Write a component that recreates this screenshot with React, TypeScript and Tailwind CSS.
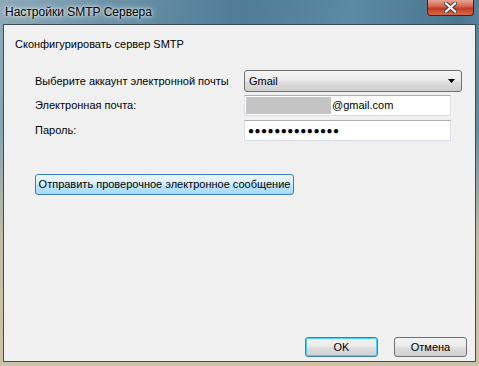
import React from "react";

export default function App() {
  const font = { fontFamily: '"Liberation Sans", Arial, sans-serif' };
  return (
    <div
      className="w-[479px] h-[366px] flex flex-col overflow-hidden bg-[linear-gradient(180deg,rgba(0,0,0,0)_0%,rgba(0,0,0,0)_35%,rgba(201,192,164,0.9)_65%,#cdc4a8_100%),linear-gradient(100deg,#8eaab9_0%,#6d93a9_20%,#4f7c96_45%,#5b8aa3_65%,#4a7790_85%,#7ea0b2_100%)]"
      style={font}
    >
      {/* title bar */}
      <div className="h-[24px] flex items-start justify-between shrink-0">
        <div className="pl-[5px] pt-[3px] text-[12px] text-black [text-shadow:0_0_6px_#ffffff,0_0_3px_#ffffff]">
          Настройки SMTP Сервера
        </div>
        <div className="mr-[5px] w-[47px] h-[16px] rounded-b-[4px] border border-t-0 border-[#5a1a14] bg-[linear-gradient(#e8a493_0%,#d2604a_45%,#c23a22_55%,#d96a4c_100%)] flex items-center justify-center">
          <svg width="13" height="11" viewBox="0 0 13 11">
            <path d="M2 1.5 L11 9.5 M11 1.5 L2 9.5" stroke="#3b3b3b" strokeWidth="4" strokeLinecap="square" />
            <path d="M2 1.5 L11 9.5 M11 1.5 L2 9.5" stroke="#ffffff" strokeWidth="2.2" strokeLinecap="square" />
          </svg>
        </div>
      </div>
      {/* client */}
      <div className="flex-1 mx-[3px] mb-[4px] border border-[#3f4a52] bg-[#f0f0f0] flex flex-col text-[11px] text-black">
        <div className="pl-[11px] pt-[13px] leading-[13px]">Сконфигурировать сервер SMTP</div>
        <div className="pl-[31px] pt-[19px] flex flex-col">
          <div className="flex items-center h-[22px]">
            <div className="w-[209px]">Выберите аккаунт электронной почты</div>
            <div className="w-[218px] h-[22px] rounded-[3px] border border-[#707070] bg-[linear-gradient(#f4f4f4_0%,#ebebeb_45%,#dddddd_55%,#cfcfcf_100%)] flex items-center justify-between pl-[4px] pr-[5px]">
              <span>Gmail</span>
              <svg width="8" height="4" viewBox="0 0 8 4"><path d="M0 0 H7 L3.5 4 Z" fill="#000" /></svg>
            </div>
          </div>
          <div className="flex items-center h-[21px] mt-[3px]">
            <div className="w-[209px]">Электронная почта:</div>
            <div className="w-[207px] h-[21px] border border-[#dbdfe6] border-t-[#abadb3] bg-white flex items-center pl-[1px]">
              <span className="w-[85px] h-[17px] bg-[#c4c4c4]" />
              <span className="ml-[1px]">@gmail.com</span>
            </div>
          </div>
          <div className="flex items-center h-[21px] mt-[4px]">
            <div className="w-[209px]">Пароль:</div>
            <div className="w-[207px] h-[21px] border border-[#dbdfe6] border-t-[#abadb3] bg-white flex items-center pl-[3px]">
              <span className="tracking-[0.5px] text-[10px]">●●●●●●●●●●●●●●</span>
            </div>
          </div>
          <div className="mt-[33px]">
            <button className="h-[21px] w-[259px] rounded-[3px] border border-[#3c7fb1] bg-[linear-gradient(#eaf6fd_0%,#d9f0fc_45%,#bee6fd_55%,#a7d9f5_100%)] text-[11px] text-black leading-none">
              Отправить проверочное электронное сообщение
            </button>
          </div>
        </div>
        <div className="flex-1" />
        <div className="flex justify-end gap-[16px] pr-[8px] pb-[4px]">
          <button className="w-[73px] h-[20px] rounded-[3px] border border-[#3c7fb1] bg-[linear-gradient(#f2f2f2_0%,#ebebeb_45%,#dddddd_55%,#cfcfcf_100%)] shadow-[inset_0_0_0_1px_#48d4f8] text-[11px] leading-none">
            OK
          </button>
          <button className="w-[73px] h-[20px] rounded-[3px] border border-[#707070] bg-[linear-gradient(#f2f2f2_0%,#ebebeb_45%,#dddddd_55%,#cfcfcf_100%)] text-[11px] leading-none">
            Отмена
          </button>
        </div>
      </div>
    </div>
  );
}
